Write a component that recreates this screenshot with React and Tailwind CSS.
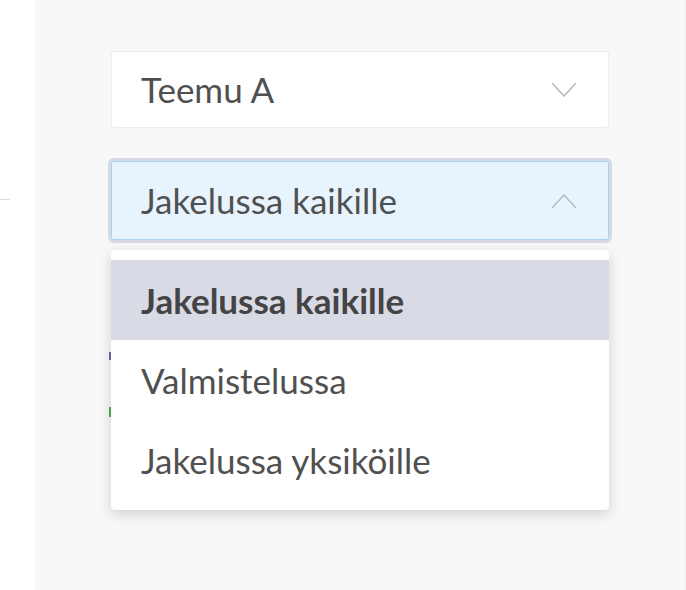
import React from 'react';

const font = { fontFamily: 'Lato, "Open Sans", sans-serif' };

function Chevron({ up }) {
  return (
    <svg width="26" height="16" viewBox="0 0 26 16" className="text-[#bcbcbc]">
      <path d={up ? 'M1 15 L13 2 L25 15' : 'M1 1 L13 14 L25 1'} fill="none" stroke="currentColor" strokeWidth="1.6" />
    </svg>
  );
}

export default function App() {
  const options = ['Jakelussa kaikille', 'Valmistelussa', 'Jakelussa yksiköille'];
  return (
    <div className="flex h-[590px] w-[686px] overflow-hidden bg-white text-[#505050]" style={font}>
      {/* left strip */}
      <div className="w-[35px] shrink-0 pt-[199px]">
        <div className="h-px w-[10px] bg-[#dcdcdc]" />
      </div>

      {/* panel */}
      <div className="flex-1 border-r border-[#ececf3] bg-[#f8f8f8] pl-[76px] pt-[51px]">
        <div className="w-[498px]">
          <div className="flex h-[77px] items-center justify-between rounded-[3px] border border-[#ececec] bg-white pl-[29px] pr-[31px]">
            <span className="text-[35px] leading-none">Teemu A</span>
            <Chevron />
          </div>

          <div className="mt-[33px] flex h-[79px] items-center justify-between rounded-[3px] border border-[#a5d3f7] bg-[#e8f4fd] pl-[29px] pr-[31px] shadow-[0_0_0_3px_#d9d9e4]">
            <span className="text-[35px] leading-none">Jakelussa kaikille</span>
            <Chevron up />
          </div>

          <div className="relative">
            <div className="absolute left-[-2px] top-[102px] h-[8px] w-[2px] bg-[#6a6ab8]" />
            <div className="absolute left-[-2px] top-[157px] h-[10px] w-[2px] bg-[#4caf50]" />
            <div className="relative mt-[10px] rounded-[4px] bg-white py-[10px] shadow-[0_4px_14px_rgba(0,0,0,0.16)]">
              {options.map((o, i) => (
                <div
                  key={o}
                  className={`flex h-[80px] items-center pl-[30px] text-[35px] leading-none ${i === 0 ? 'bg-[#d8dae5] font-bold text-[#444]' : ''}`}
                >
                  {o}
                </div>
              ))}
            </div>
          </div>
        </div>
      </div>
    </div>
  );
}
